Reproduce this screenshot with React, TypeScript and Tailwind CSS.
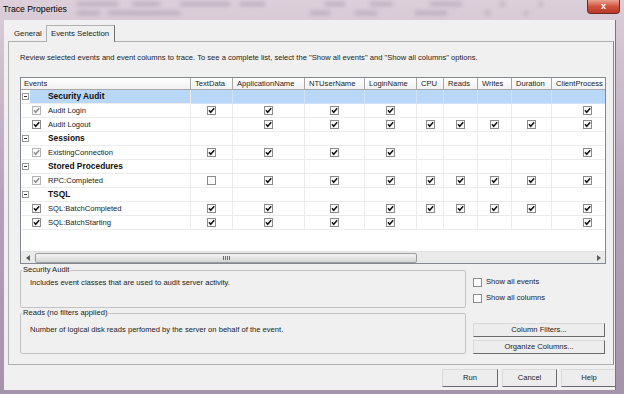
import React from "react";

const GRID = "grid grid-cols-[170px_42px_72px_60px_52px_27px_34px_34px_40px_72px]";

const columns = [
  "TextData",
  "ApplicationName",
  "NTUserName",
  "LoginName",
  "CPU",
  "Reads",
  "Writes",
  "Duration",
  "ClientProcess",
];

type Row =
  | { cat: string; sel?: boolean }
  | { name: string; dim?: boolean; cells: number[] };

// 0 = nothing, 1 = checked, 2 = empty box
const rows: Row[] = [
  { cat: "Security Audit", sel: true },
  { name: "Audit Login", dim: true, cells: [1, 1, 1, 1, 0, 0, 0, 0, 1] },
  { name: "Audit Logout", cells: [0, 1, 1, 1, 1, 1, 1, 1, 1] },
  { cat: "Sessions" },
  { name: "ExistingConnection", dim: true, cells: [1, 1, 1, 1, 0, 0, 0, 0, 1] },
  { cat: "Stored Procedures" },
  { name: "RPC:Completed", dim: true, cells: [2, 1, 1, 1, 1, 1, 1, 1, 1] },
  { cat: "TSQL" },
  { name: "SQL:BatchCompleted", cells: [1, 1, 1, 1, 1, 1, 1, 1, 1] },
  { name: "SQL:BatchStarting", cells: [1, 1, 1, 1, 0, 0, 0, 0, 1] },
];

const CheckBox = ({ on, dim }: { on: boolean; dim?: boolean }) => (
  <svg width="9" height="9" viewBox="0 0 9 9" className="shrink-0">
    <rect x="0.5" y="0.5" width="8" height="8" fill="#fdfdfd" stroke={dim ? "#b4b4b4" : "#8a8a8a"} />
    {on && (
      <path
        d="M2 4.3 L3.7 6.3 L7.2 2.3"
        fill="none"
        stroke={dim ? "#8c8c8c" : "#111"}
        strokeWidth="1.5"
      />
    )}
  </svg>
);

const Expander = () => (
  <svg width="7" height="7" viewBox="0 0 7 7">
    <rect x="0.5" y="0.5" width="6" height="6" fill="#fff" stroke="#9a9a9a" />
    <path d="M2 3.5 H5" stroke="#333" strokeWidth="1" />
  </svg>
);

const Button = ({ label, className }: { label: string; className: string }) => (
  <button
    className={`${className} flex items-center justify-center bg-[#ededed] border border-t-[#d9d9d9] border-l-[#d9d9d9] border-r-[#6a6a6a] border-b-[#6a6a6a] text-[7.6px] text-[#222]`}
  >
    {label}
  </button>
);

export default function App() {
  return (
    <div className="w-[624px] h-[394px] overflow-hidden flex flex-col bg-linear-to-b from-[#dccfd9] via-[#b4a2ba] to-[#a592ab] font-['Liberation_Sans',Arial,sans-serif] text-[#222]">
      {/* title bar */}
      <div className="h-[20px] flex items-start">
        <div className="pl-[3px] pt-[3px] text-[8.7px] leading-[12px] text-black">Trace Properties</div>
        <div className="flex-1 flex flex-col gap-[5px] pt-[2px] opacity-35">
          <div className="flex">
            <span className="ml-[10px] w-[41px] h-[4px] bg-[#7f7488] blur-[2px]" />
            <span className="ml-[14px] w-[28px] h-[4px] bg-[#7f7488] blur-[2px]" />
            <span className="ml-[20px] w-[50px] h-[4px] bg-[#7f7488] blur-[2px]" />
            <span className="ml-[10px] w-[25px] h-[4px] bg-[#7f7488] blur-[2px]" />
            <span className="ml-[60px] w-[20px] h-[4px] bg-[#7f7488] blur-[2px]" />
            <span className="ml-[25px] w-[22px] h-[4px] bg-[#7f7488] blur-[2px]" />
            <span className="ml-[38px] w-[32px] h-[4px] bg-[#7f7488] blur-[2px]" />
            <span className="ml-[38px] w-[5px] h-[4px] bg-[#7f7488] blur-[2px]" />
            <span className="ml-[34px] w-[4px] h-[4px] bg-[#7f7488] blur-[2px]" />
          </div>
          <div className="flex">
            <span className="ml-[10px] w-[23px] h-[4px] bg-[#7f7488] blur-[2px]" />
            <span className="ml-[8px] w-[72px] h-[4px] bg-[#7f7488] blur-[2px]" />
            <span className="ml-[130px] w-[20px] h-[4px] bg-[#7f7488] blur-[2px]" />
            <span className="ml-[25px] w-[22px] h-[4px] bg-[#7f7488] blur-[2px]" />
            <span className="ml-[38px] w-[32px] h-[4px] bg-[#7f7488] blur-[2px]" />
            <span className="ml-[38px] w-[5px] h-[4px] bg-[#7f7488] blur-[2px]" />
            <span className="ml-[34px] w-[4px] h-[4px] bg-[#7f7488] blur-[2px]" />
          </div>
        </div>
        <div className="mr-[4px] w-[33px] h-[14px] rounded-b-[4px] border border-t-0 border-[#6e2a22] bg-linear-to-b from-[#e8a493] via-[#d0533e] to-[#b8382a] flex items-center justify-center text-white text-[9px] font-bold leading-none">
          x
        </div>
      </div>

      {/* frame + client */}
      <div className="flex h-[370px]">
        <div className="w-[4px]" />
        <div className="w-[612px] h-full overflow-hidden bg-[#f0f0f0] border-r border-[#7d7385] flex flex-col text-[7.6px]">
          {/* tabs */}
          <div className="h-[21px] flex items-end pl-[6px] relative z-10">
            <div className="w-[36px] h-[14px] flex items-center pl-[4px] text-[7.8px]">General</div>
            <div className="w-[69px] h-[17px] -mb-[1px] flex items-center pl-[4px] text-[7.8px] bg-[#f0f0f0] border-x border-t border-[#b0b0b0] border-r-[#6f6f6f]">
              Events Selection
            </div>
          </div>

          {/* tab panel */}
          <div className="ml-[4px] w-[606px] h-[324px] border border-[#b0b0b0] border-r-[#8a8a8a] pl-[11px] flex flex-col">
            <p className="mt-[10px] h-[12px] leading-[12px]">
              Review selected events and event columns to trace. To see a complete list, select the "Show all events" and "Show all columns" options.
            </p>

            {/* events grid */}
            <div className="mt-[13px] w-[586px] h-[187px] border border-[#828790] bg-white flex flex-col overflow-hidden">
              <div className={`${GRID} h-[12px] shrink-0`}>
                <div className="flex items-center pl-[3px] bg-linear-to-b from-white to-[#f1f1f1] border-r border-b border-[#a8a8a8] whitespace-nowrap">
                  Events
                </div>
                {columns.map((c) => (
                  <div
                    key={c}
                    className="flex items-center pl-[4px] bg-linear-to-b from-white to-[#f1f1f1] border-r border-b border-[#a8a8a8] whitespace-nowrap overflow-hidden"
                  >
                    {c}
                  </div>
                ))}
              </div>

              {rows.map((r, i) =>
                "cat" in r ? (
                  <div key={i} className={`${GRID} h-[14px] shrink-0`}>
                    <div className="flex h-full border-r border-b border-[#ececec]">
                      <div className="w-[9px] flex items-center justify-center bg-white">
                        <Expander />
                      </div>
                      <div
                        className={`flex-1 flex items-center pl-[18px] font-bold text-[8.4px] text-[#111] ${
                          r.sel ? "bg-[#b9d7f9]" : ""
                        }`}
                      >
                        {r.cat}
                      </div>
                    </div>
                    {columns.map((c) => (
                      <div
                        key={c}
                        className={`h-full border-r border-b ${
                          r.sel ? "bg-[#b9d7f9] border-[#d0e3fa]" : "border-[#ececec]"
                        }`}
                      />
                    ))}
                  </div>
                ) : (
                  <div key={i} className={`${GRID} h-[14px] shrink-0`}>
                    <div className="flex items-center h-full pl-[11px] border-r border-b border-[#ececec] whitespace-nowrap">
                      <CheckBox on dim={r.dim} />
                      <span className="ml-[7px]">{r.name}</span>
                    </div>
                    {r.cells.map((v, j) => (
                      <div key={j} className="flex items-center justify-center h-full border-r border-b border-[#ececec]">
                        {v > 0 && <CheckBox on={v === 1} />}
                      </div>
                    ))}
                  </div>
                )
              )}

              <div className="flex-1" />

              {/* horizontal scrollbar */}
              <div className="h-[12px] shrink-0 flex items-center bg-[#eaeaea] border-t border-[#e0e0e0]">
                <div className="w-[13px] flex justify-center">
                  <svg width="4" height="6" viewBox="0 0 4 6">
                    <polygon points="4,0 4,6 0,3" fill="#5a5a5a" />
                  </svg>
                </div>
                <div className="ml-[1px] w-[382px] h-[10px] rounded-[2px] border border-[#9c9c9c] bg-linear-to-b from-[#f4f4f4] to-[#d5d5d5] flex items-center justify-center gap-[1px]">
                  <span className="w-[1px] h-[4px] bg-[#6e6e6e]" />
                  <span className="w-[1px] h-[4px] bg-[#6e6e6e]" />
                  <span className="w-[1px] h-[4px] bg-[#6e6e6e]" />
                  <span className="w-[1px] h-[4px] bg-[#6e6e6e]" />
                </div>
                <div className="flex-1" />
                <div className="w-[13px] flex justify-center">
                  <svg width="4" height="6" viewBox="0 0 4 6">
                    <polygon points="0,0 0,6 4,3" fill="#5a5a5a" />
                  </svg>
                </div>
              </div>
            </div>

            {/* lower area */}
            <div className="mt-[1px] flex">
              <div className="w-[446px] flex flex-col">
                <fieldset className="h-[43px] border border-[#c3c3c3] rounded-[2px]">
                  <legend className="ml-[1px] px-[1px] leading-[10px]">Security Audit</legend>
                  <p className="mt-[3px] pl-[9px] leading-[10px]">
                    Includes event classes that are used to audit server activity.
                  </p>
                </fieldset>
                <fieldset className="h-[46px] border border-[#c3c3c3] rounded-[2px]">
                  <legend className="ml-[1px] px-[1px] leading-[10px]">Reads (no filters applied)</legend>
                  <p className="mt-[7px] pl-[9px] leading-[10px]">
                    Number of logical disk reads perfomed by the server on behalf of the event.
                  </p>
                </fieldset>
              </div>
              <div className="ml-[7px] w-[133px] flex flex-col">
                <label className="mt-[12px] h-[10px] flex items-center gap-[4px]">
                  <CheckBox on={false} />
                  Show all events
                </label>
                <label className="mt-[6px] h-[10px] flex items-center gap-[4px]">
                  <CheckBox on={false} />
                  Show all columns
                </label>
                <Button label="Column Filters..." className="mt-[20px] w-[132px] h-[14px]" />
                <Button label="Organize Columns..." className="mt-[3px] w-[132px] h-[14px]" />
              </div>
            </div>
          </div>

          {/* dialog buttons */}
          <div className="mt-[4px] flex gap-[4px] pl-[438px]">
            <Button label="Run" className="w-[56px] h-[18px] shrink-0" />
            <Button label="Cancel" className="w-[55px] h-[18px] shrink-0" />
            <Button label="Help" className="w-[56px] h-[18px] shrink-0" />
          </div>
        </div>
        <div className="flex-1" />
      </div>
    </div>
  );
}
